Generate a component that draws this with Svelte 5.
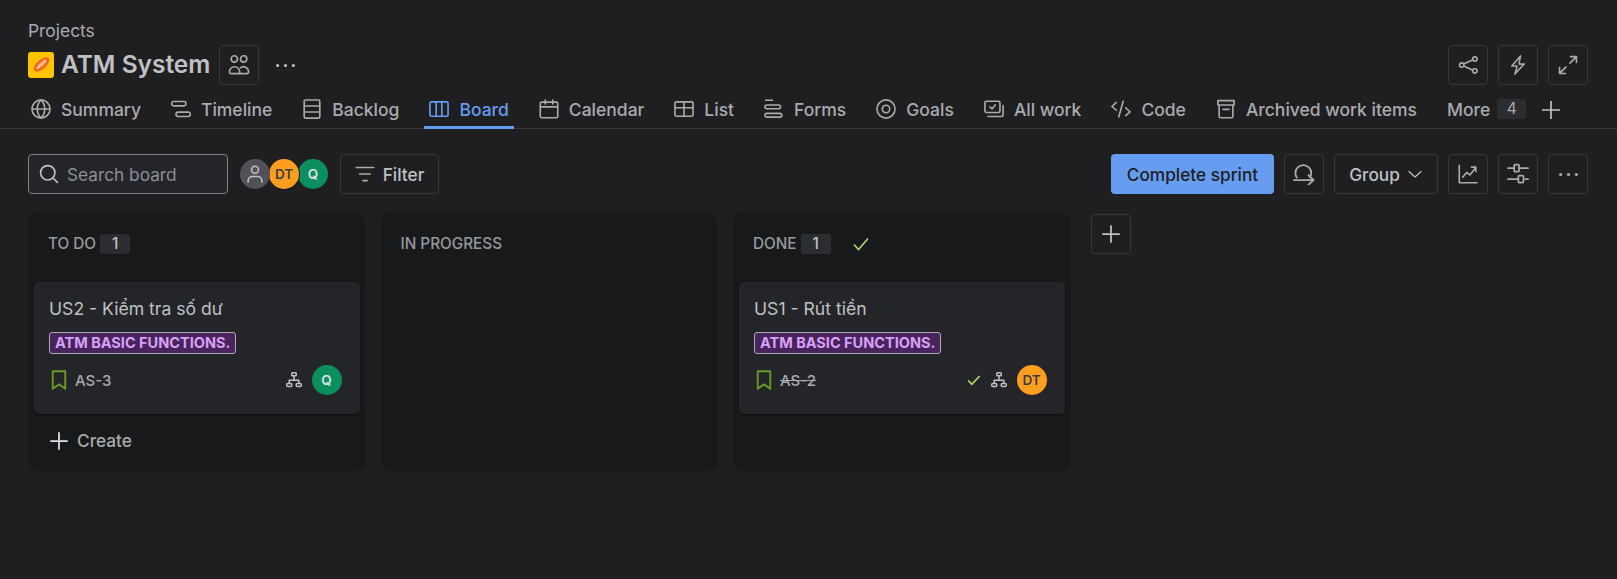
<script>
  const tabs = [
    { label: "Summary", d: "M15.25 8a7.25 7.25 0 1 1-14.5 0 7.25 7.25 0 1 1 14.5 0M.75 8h14.5M8 .75C6 2.75 5 5.25 5 8s1 5.25 3 7.25c2-2 3-4.5 3-7.25S10 2.75 8 .75" },
    { label: "Timeline", d: "M2.25 2h8a1.75 1.75 0 0 1 0 3.5h-8a1.75 1.75 0 0 1 0-3.5M5.75 10.5h8a1.75 1.75 0 0 1 0 3.5h-8a1.75 1.75 0 0 1 0-3.5" },
    { label: "Backlog", d: "M3 .75h10c.7 0 1.25.55 1.25 1.25v12c0 .7-.55 1.25-1.25 1.25H3c-.7 0-1.25-.55-1.25-1.25V2c0-.7.55-1.25 1.25-1.25M1.75 5.6h12.5M1.75 10.4h12.5" },
    { label: "Board", d: "M2 2.25h12c.7 0 1.25.55 1.25 1.25v9c0 .7-.55 1.25-1.25 1.25H2c-.7 0-1.25-.55-1.25-1.25v-9c0-.7.55-1.25 1.25-1.25M5.75 2.25v11.5M10.25 2.25v11.5", active: true },
    { label: "Calendar", d: "M2.25 2.5h11.5c.7 0 1.25.55 1.25 1.25v10c0 .7-.55 1.25-1.25 1.25H2.25C1.55 15 1 14.45 1 13.75v-10c0-.7.55-1.25 1.25-1.25M1 6.25h14M5 .75V4M11 .75V4" },
    { label: "List", d: "M2 2.25h12c.7 0 1.25.55 1.25 1.25v9c0 .7-.55 1.25-1.25 1.25H2c-.7 0-1.25-.55-1.25-1.25v-9c0-.7.55-1.25 1.25-1.25M.75 7h14.5M8 2.25v11.5" },
    { label: "Forms", d: "M1.25 1h5.5M2.25 4.75h9.5a1.5 1.5 0 0 1 0 3h-9.5a1.5 1.5 0 0 1 0-3M2.25 11.5h10.5a1.5 1.5 0 0 1 0 3H2.25a1.5 1.5 0 0 1 0-3" },
    { label: "Goals", d: "M15.25 8a7.25 7.25 0 1 1-14.5 0 7.25 7.25 0 1 1 14.5 0M11 8a3 3 0 1 1-6 0 3 3 0 1 1 6 0" },
    { label: "All work", d: "M2 1.75h9.5c.7 0 1.25.55 1.25 1.25v6.5c0 .7-.55 1.25-1.25 1.25H2c-.7 0-1.25-.55-1.25-1.25V3c0-.7.55-1.25 1.25-1.25M4.75 6.25l1.75 1.75L9 4.75M15.25 5.25v7.5c0 .7-.55 1.25-1.25 1.25H3.25" },
    { label: "Code", d: "M4.25 2.75.75 6l3.5 3M9.75 1.75 6.25 14.25M11.75 7l3.5 3.25-3.5 3" },
    { label: "Archived work items", d: "M1.5 1.25h13v3.5h-13zM2.5 4.75v9c0 .7.55 1.25 1.25 1.25h8.5c.7 0 1.25-.55 1.25-1.25v-9M5.5 8.25h5" },
  ];

  const columns = [
    { name: "TO DO", count: 1, create: true, cards: [{ title: "US2 - Kiểm tra số dư", key: "AS-3", who: "Q", done: false }] },
    { name: "IN PROGRESS", cards: [] },
    { name: "DONE", count: 1, check: true, cards: [{ title: "US1 - Rút tiền", key: "AS-2", who: "DT", done: true }] },
  ];
</script>

{#snippet glyph(d, size = 20, cls = "")}
  <svg class={cls} width={size} height={size} viewBox="0 0 16 16" fill="none" stroke="currentColor" stroke-width="1.3" stroke-linecap="round" stroke-linejoin="round"><path {d} /></svg>
{/snippet}

{#snippet dots()}
  <svg width="23" height="23" viewBox="0 0 16 16" fill="currentColor"><circle cx="2.5" cy="8" r="1.1" /><circle cx="8" cy="8" r="1.1" /><circle cx="13.5" cy="8" r="1.1" /></svg>
{/snippet}

<div class="page">
  <header class="head">
    <div class="crumb">Projects</div>
    <div class="title-row">
      <svg class="logo" width="26" height="26" viewBox="0 0 26 26">
        <rect width="26" height="26" rx="3" fill="#ffc400" />
        <ellipse cx="13.5" cy="12.5" rx="9.5" ry="4.5" transform="rotate(-40 13.5 12.5)" fill="#f2601f" />
        <ellipse cx="13.5" cy="12.5" rx="7" ry="2.5" transform="rotate(-40 13.5 12.5)" fill="#ff8a3d" />
        <path d="M9 16l2-.5.5-2 2-.5.5-2 2-.5.5-2 1.500-.5" fill="none" stroke="#ffeadb" stroke-width="1.200" />
      </svg>
      <h1>ATM System</h1>
      <button class="icon-btn">
        <svg width="22" height="22" viewBox="0 0 16 16" fill="none" stroke="currentColor" stroke-width="1.200"><circle cx="4.600" cy="3.600" r="2.300" /><circle cx="11.400" cy="3.600" r="2.300" /><path d="M2.250 14.250A1.250 1.250 0 0 1 1 13a3.750 3.750 0 0 1 7.500 0c0 .7.550 1.250 1.250 1.250h4A1.250 1.250 0 0 0 15 13a3.750 3.750 0 0 0-6.250-2.800M2.250 14.250h7.500" /></svg>
      </button>
      <span class="more-dots">{@render dots()}</span>
      <div class="title-actions">
        <button class="icon-btn">{@render glyph("M13.5 1.5a1.75 1.75 0 1 0 0 3.5 1.75 1.75 0 0 0 0-3.5M3 6.25a1.75 1.75 0 1 0 0 3.5 1.75 1.75 0 0 0 0-3.5M13.5 11a1.75 1.75 0 1 0 0 3.5 1.75 1.75 0 0 0 0-3.5M4.6 7.2l7.3-3.4M4.6 8.8l7.3 3.4")}</button>
        <button class="icon-btn">{@render glyph("M10 .75 3 8.75h4v1.5L5.5 15.25 13 7.25H9V5.75z")}</button>
        <button class="icon-btn">{@render glyph("M9.5 6.5 14.75 1.25M10 1.25h4.75V6M6.5 9.5 1.25 14.75M6 14.75H1.25V10")}</button>
      </div>
    </div>
    <nav class="tabs">
      {#each tabs as tab}
        <span class="tab" class:active={tab.active}>{@render glyph(tab.d)}{tab.label}</span>
      {/each}
      <span class="tab more">More <b class="more-count">4</b></span>
      <svg class="tab-add" width="18" height="18" viewBox="0 0 16 16" fill="none" stroke="currentColor" stroke-width="1.5"><path d="M8 0v16M0 8h16" /></svg>
    </nav>
  </header>

  <section class="toolbar">
    <div class="search">
      {@render glyph("M7 1.25a5.75 5.75 0 1 0 0 11.5 5.75 5.75 0 0 0 0-11.5M11.2 11.2l3.55 3.55")}
      <span>Search board</span>
    </div>
    <div class="avatars">
      <span class="avatar none">
        <svg width="20" height="20" viewBox="0 0 16 16" fill="none" stroke="currentColor" stroke-width="1.3"><circle cx="8" cy="4.6" r="2.8" /><path d="M2.5 15v-1.5C2.5 11.5 4 10 6 10h4c2 0 3.500 1.500 3.500 3.500V15" /></svg>
      </span>
      <span class="avatar dt">DT</span>
      <span class="avatar q">Q</span>
    </div>
    <button class="btn filter">{@render glyph("M1 2.75h14M3.75 8h8.500M6.250 13.250h3.500")} Filter</button>
    <div class="toolbar-right">
      <button class="primary">Complete sprint</button>
      <button class="square">{@render glyph("M2.750 10.500C2 9.500 1.750 8.500 1.750 7.250a5.750 5.750 0 0 1 11.500 0c0 1.250-.25 2.250-1 3.250M.75 12.500h14M11.250 8.750l3.750 3.750-3.750 3.250", 22)}</button>
      <button class="btn group">Group <svg width="16" height="16" viewBox="0 0 16 16" fill="none" stroke="currentColor" stroke-width="1.200" stroke-linecap="round" stroke-linejoin="round"><path d="M2 5.500l6 5.500 6-5.500" /></svg></button>
      <button class="square">{@render glyph("M1 1v14h14.250M3.750 10.500l3.250-3.750 2.500 2 4.750-6M10.750 2.500h3.500v3.500")}</button>
      <button class="square">{@render glyph("M.75 3.750h3.500M10 3.750h5.250M.75 11.750h7.250M13.500 11.750h1.750M6 1.250h2a.75.75 0 0 1 .75.75v3.500a.75.75 0 0 1-.75.75H6a.75.75 0 0 1-.75-.75V2A.75.75 0 0 1 6 1.250M9 9.250h2.250a.75.75 0 0 1 .75.75v3.500a.75.75 0 0 1-.75.75H9a.75.75 0 0 1-.75-.75V10A.75.75 0 0 1 9 9.250", 22)}</button>
      <button class="square">{@render dots()}</button>
    </div>
  </section>

  <main class="board">
    {#each columns as col}
      <div class="column">
        <div class="col-head">
          <span>{col.name}</span>
          {#if col.count}<b class="count">{col.count}</b>{/if}
          {#if col.check}
            <svg class="col-check" width="16" height="16" viewBox="0 0 16 16" fill="none" stroke="currentColor" stroke-width="1.5"><path d="M1 8.500l4.500 5L15 2.500" /></svg>
          {/if}
        </div>
        {#each col.cards as card}
          <article class="card">
            <div class="card-title">{card.title}</div>
            <span class="label">ATM BASIC FUNCTIONS.</span>
            <div class="card-foot">
              <svg class="bookmark" width="20" height="20" viewBox="0 0 16 16" fill="none" stroke="currentColor" stroke-width="1.500" stroke-linejoin="round"><path d="M3 1h10v14l-5-3.500L3 15z" /></svg>
              <span class="key" class:struck={card.done}>{card.key}</span>
              <span class="foot-right">
                {#if card.done}
                  <svg class="small-check" width="14" height="14" viewBox="0 0 16 16" fill="none" stroke="currentColor" stroke-width="1.800"><path d="M1.500 8.500l4 4.500L14.500 3.500" /></svg>
                {/if}
                <svg class="tree" width="16" height="16" viewBox="0 0 16 16" fill="none" stroke="currentColor" stroke-width="1.500"><rect x="5.750" y=".75" width="4.500" height="3" rx=".8" /><rect x=".75" y="11.500" width="5" height="3" rx="1" /><rect x="10.250" y="11.500" width="5" height="3" rx="1" /><path d="M8 3.750v4.500M3.250 11.500V8.250h9.500v3.250" /></svg>
                <span class="avatar {card.who === 'Q' ? 'q' : 'dt'}">{card.who}</span>
              </span>
            </div>
          </article>
        {/each}
        {#if col.create}
          <div class="create">
            <svg width="20" height="20" viewBox="0 0 16 16" fill="none" stroke="currentColor" stroke-width="1.400"><path d="M8 1v14M1 8h14" /></svg>
            Create
          </div>
        {/if}
      </div>
    {/each}
    <button class="square add-col">
      <svg width="20" height="20" viewBox="0 0 16 16" fill="none" stroke="currentColor" stroke-width="1.400"><path d="M8 1v14M1 8h14" /></svg>
    </button>
  </main>
</div>

<style>
  :global(body) {
    margin: 0;
    background: #1f1f21;
  }
  .page {
    height: 579px;
    overflow: hidden;
    background: #1f1f21;
    color: #a9abaf;
    font-family: Inter, "Liberation Sans", sans-serif;
    font-size: 17.25px;
  }
  button {
    font: inherit;
    color: inherit;
    background: none;
    border: 1px solid #36373a;
    border-radius: 4px;
    padding: 0;
    display: inline-flex;
    align-items: center;
    justify-content: center;
  }

  .head {
    border-bottom: 1px solid #36373a;
    padding: 21px 29px 0 28px;
  }
  .crumb {
    height: 20px;
    line-height: 20px;
    font-size: 17.4px;
  }
  .title-row {
    display: flex;
    align-items: center;
    margin-top: 4px;
    height: 40px;
  }
  .logo {
    margin-right: 7px;
  }
  h1 {
    margin: -2px 9px 0 0;
    font-size: 24.5px;
    font-weight: 600;
    color: #bfc1c4;
  }
  .icon-btn {
    width: 40px;
    height: 40px;
    color: #a9abaf;
  }
  .more-dots {
    display: inline-flex;
    margin-left: 15px;
    color: #bfc1c4;
  }
  .title-actions {
    margin-left: auto;
    display: flex;
    gap: 10px;
  }
  .tabs {
    display: flex;
    align-items: center;
    gap: 20px;
    margin: 3px 0 0 -2px;
    height: 40px;
  }
  .tab {
    display: flex;
    align-items: center;
    gap: 10px;
    height: 40px;
    padding: 4px 5px 0;
    font-size: 17.5px;
    font-weight: 500;
    white-space: nowrap;
    border-bottom: 3px solid transparent;
    box-sizing: border-box;
    margin-bottom: -1px;
  }
  .tab.active {
    color: #669df1;
    border-bottom-color: #669df1;
  }
  .tab.more {
    gap: 7px;
  }
  .more-count {
    font-weight: 400;
    font-size: 15.5px;
    background: #2c2d30;
    border-radius: 3px;
    width: 29px;
    height: 20px;
    line-height: 20px;
    text-align: center;
  }
  .tab-add {
    color: #bfc1c4;
    margin: 4px 0 0 -9px;
  }

  .toolbar {
    display: flex;
    align-items: center;
    padding: 25px 29px 0 28px;
  }
  .search {
    box-sizing: border-box;
    width: 200px;
    height: 40px;
    display: flex;
    align-items: center;
    gap: 8px;
    padding: 0 10px;
    background: #242528;
    border: 1px solid #7e8188;
    border-radius: 4px;
    color: #8c8f97;
  }
  .search svg {
    color: #bfc1c4;
  }
  .avatars {
    display: flex;
    margin-left: 12px;
  }
  .avatars .avatar {
    margin-right: -1px;
  }
  .avatars .none {
    z-index: 3;
  }
  .avatars .dt {
    z-index: 2;
    box-shadow: 0 0 0 1px #1f1f21;
  }
  .avatar {
    width: 30px;
    height: 30px;
    border-radius: 50%;
    display: inline-flex;
    align-items: center;
    justify-content: center;
    font-size: 13.5px;
    font-weight: 600;
    position: relative;
  }
  .avatar.none {
    background: #505258;
    color: #bfc1c4;
  }
  .avatar.dt {
    background: #ff9d1f;
    color: #3b3d42;
  }
  .avatar.q {
    background: #0b8f5e;
    color: #dfe1e6;
  }
  .btn {
    height: 40px;
    gap: 8px;
    box-sizing: border-box;
    font-weight: 500;
    color: #bfc1c4;
  }
  .filter {
    width: 99px;
    margin-left: 13px;
  }
  .filter :global(svg) {
    color: #a9abaf;
  }
  .toolbar-right {
    margin-left: auto;
    display: flex;
    gap: 10px;
  }
  .primary {
    width: 163px;
    height: 40px;
    box-sizing: border-box;
    background: #669df1;
    border: 0;
    color: #1f1f21;
    font-weight: 500;
  }
  .square {
    width: 40px;
    height: 40px;
    box-sizing: border-box;
    color: #a9abaf;
  }
  .group {
    width: 104px;
    gap: 7px;
  }

  .board {
    display: flex;
    align-items: flex-start;
    gap: 15px;
    padding: 19px 28px 0;
  }
  .column {
    box-sizing: border-box;
    width: 337.5px;
    height: 258px;
    padding: 0 6px;
    background: #18191a;
    border-radius: 10px;
  }
  .col-head {
    display: flex;
    align-items: center;
    height: 69px;
    padding: 0 14px;
    font-size: 15.3px;
    font-weight: 500;
    color: #96999e;
    box-sizing: border-box;
    padding-bottom: 8px;
  }
  .count {
    margin-left: 4px;
    width: 30px;
    height: 20px;
    line-height: 20px;
    text-align: center;
    background: #2c2d30;
    border-radius: 3px;
    color: #bfc1c4;
    font-weight: 500;
  }
  .col-check {
    margin-left: 22px;
    color: #b3df72;
  }
  .card {
    box-sizing: border-box;
    height: 132px;
    padding: 14px 15px;
    background: #242528;
    border-radius: 5px;
    box-shadow: 0 1px 2px #00000080;
  }
  .card-title {
    height: 26px;
    line-height: 26px;
    font-size: 17.6px;
    color: #bfc1c4;
  }
  .label {
    display: inline-block;
    margin-top: 10px;
    box-sizing: border-box;
    height: 22px;
    line-height: 19px;
    padding: 0 5px;
    font-size: 14.5px;
    font-weight: 700;
    color: #d8a0f7;
    background: #48245d;
    border: 1px solid #a9abaf;
    border-radius: 3px;
    white-space: nowrap;
  }
  .card-foot {
    display: flex;
    align-items: center;
    height: 30px;
    margin-top: 11px;
  }
  .bookmark {
    color: #6a9a23;
  }
  .key {
    margin-left: 6px;
    font-size: 15px;
    font-weight: 500;
  }
  .struck {
    text-decoration: line-through;
  }
  .foot-right {
    margin-left: auto;
    margin-right: 3px;
    display: flex;
    align-items: center;
  }
  .small-check {
    color: #b3df72;
    margin-right: 10px;
  }
  .tree {
    color: #bfc1c4;
    margin-right: 10px;
  }
  .create {
    display: flex;
    align-items: center;
    gap: 8px;
    margin: 16px 0 0 15px;
    font-weight: 500;
  }
  .create svg {
    color: #dfe1e6;
  }
  .add-col {
    margin-left: 5px;
    margin-top: 1px;
    color: #bfc1c4;
  }
</style>
